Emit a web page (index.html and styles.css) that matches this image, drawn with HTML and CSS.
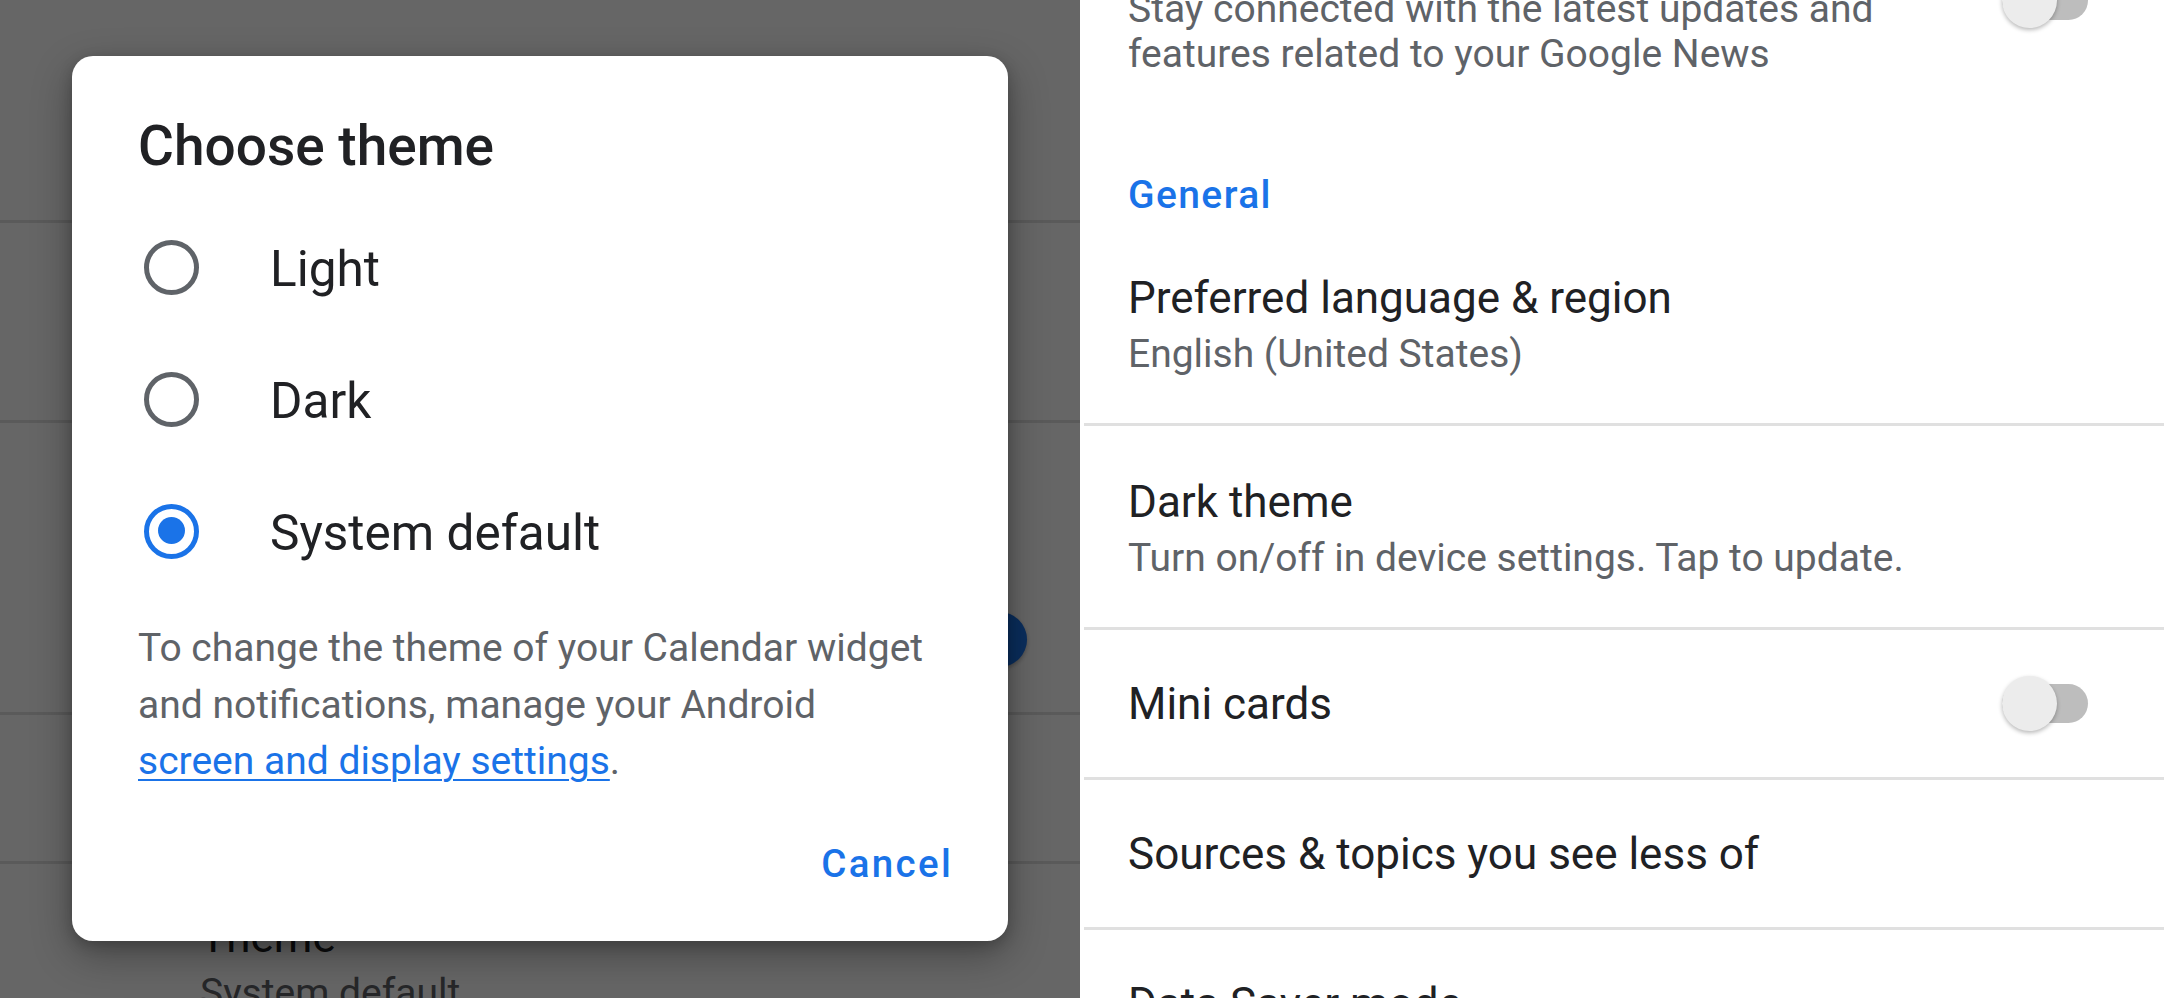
FILE: index.html
```html
<!DOCTYPE html>
<html lang="en">
<head>
    <meta charset="UTF-8">
    <meta name="viewport" content="width=device-width, initial-scale=1.0">
    <title>Settings - Choose theme</title>
    <link rel="stylesheet" href="styles.css">
</head>
<body>
    <div class="screen">
        <section class="pane pane-left">
            <div class="cal-list">
                <div class="cal-row cal-row-1">
                    <div class="row-text">
                        <div class="row-title">Start of the week</div>
                        <div class="row-sub">Sunday</div>
                    </div>
                </div>
                <div class="cal-row cal-row-2">
                    <div class="row-text">
                        <div class="row-title">Alternate calendars</div>
                        <div class="row-sub">None</div>
                    </div>
                </div>
                <div class="cal-row cal-row-3">
                    <div class="row-text">
                        <div class="row-title">Use device's time zone</div>
                        <div class="row-sub">GMT-07:00 Pacific Time</div>
                    </div>
                    <span class="switch on"></span>
                </div>
                <div class="cal-row cal-row-4">
                    <div class="row-text">
                        <div class="row-title">Default event duration</div>
                    </div>
                </div>
                <div class="cal-row cal-row-5">
                    <div class="row-text">
                        <div class="row-title">Theme</div>
                        <div class="row-sub">System default</div>
                    </div>
                </div>
            </div>

            <div class="scrim"></div>

            <div class="dialog">
                <h2 class="dialog-title">Choose theme</h2>
                <div class="radio-list">
                    <div class="radio-row">
                        <span class="radio"></span>
                        <span class="radio-label">Light</span>
                    </div>
                    <div class="radio-row">
                        <span class="radio"></span>
                        <span class="radio-label">Dark</span>
                    </div>
                    <div class="radio-row">
                        <span class="radio checked"></span>
                        <span class="radio-label">System default</span>
                    </div>
                </div>
                <p class="dialog-note">To change the theme of your Calendar widget and notifications, manage your Android <a href="#">screen and display settings</a>.</p>
                <div class="dialog-actions">
                    <button class="text-button">Cancel</button>
                </div>
            </div>
        </section>

        <section class="pane pane-right">
            <div class="news-list">
                <div class="news-row">
                    <div class="row-text">
                        <div class="row-title">Notifications from Google</div>
                        <div class="row-sub multi">Stay connected with the latest updates and features related to your Google News</div>
                    </div>
                    <span class="switch top-switch"></span>
                </div>

                <div class="section-header">General</div>

                <div class="news-row bordered">
                    <div class="row-text">
                        <div class="row-title">Preferred language &amp; region</div>
                        <div class="row-sub">English (United States)</div>
                    </div>
                </div>
                <div class="news-row bordered">
                    <div class="row-text">
                        <div class="row-title">Dark theme</div>
                        <div class="row-sub">Turn on/off in device settings. Tap to update.</div>
                    </div>
                </div>
                <div class="news-row bordered single">
                    <div class="row-text">
                        <div class="row-title">Mini cards</div>
                    </div>
                    <span class="switch"></span>
                </div>
                <div class="news-row bordered single">
                    <div class="row-text">
                        <div class="row-title">Sources &amp; topics you see less of</div>
                    </div>
                </div>
                <div class="news-row bordered single">
                    <div class="row-text">
                        <div class="row-title">Data Saver mode</div>
                    </div>
                </div>
            </div>
        </section>
    </div>
</body>
</html>
```

FILE: styles.css
```css
body {
    margin: 0;
    background: #ffffff;
    font-family: Roboto, "Noto Sans", Arial, sans-serif;
    overflow: hidden;
}

.screen {
    display: flex;
    width: 2164px;
    height: 998px;
    overflow: hidden;
}

.pane {
    height: 998px;
    overflow: hidden;
    background: #ffffff;
}

.pane-left {
    position: relative;
    width: 1080px;
    flex-shrink: 0;
}

.pane-right {
    flex: 1;
    margin-left: 4px;
}

/* shared row text */
.row-text {
    flex: 1;
    min-width: 0;
}

.row-title {
    font-size: 44px;
    line-height: 54px;
    color: #202124;
}

.row-sub {
    font-size: 39px;
    line-height: 54px;
    margin-top: 2px;
    color: #5f6368;
}

.row-sub.multi {
    line-height: 45px;
    margin-top: 0;
}

/* toggle switch */
.switch {
    position: relative;
    width: 86px;
    height: 39px;
    border-radius: 20px;
    background: #bdbdbd;
    flex-shrink: 0;
}

.switch::after {
    content: "";
    position: absolute;
    top: -8px;
    left: 0;
    width: 55px;
    height: 55px;
    border-radius: 50%;
    background: #ececec;
    box-shadow: 0 2px 4px rgba(0, 0, 0, 0.28);
}

.switch.on {
    background: #a8c7fa;
}

.switch.on::after {
    left: auto;
    right: 0;
    background: #1a73e8;
}

/* calendar list behind the dialog */
.cal-row {
    display: flex;
    align-items: center;
    box-sizing: border-box;
    padding: 0 53px 0 200px;
    border-bottom: 3px solid #e0e0e0;
}

.cal-row-1 { height: 223px; }
.cal-row-2 { height: 200px; }
.cal-row-3 {
    height: 292px;
    align-items: flex-end;
    padding-bottom: 53px;
}
.cal-row-4 { height: 149px; }
.cal-row-5 {
    border-bottom: none;
    align-items: flex-start;
    padding-top: 46px;
}

.scrim {
    position: absolute;
    inset: 0;
    background: rgba(0, 0, 0, 0.6);
}

/* dialog */
.dialog {
    position: absolute;
    top: 56px;
    left: 72px;
    width: 936px;
    height: 885px;
    box-sizing: border-box;
    padding: 58px 72px 0 66px;
    background: #ffffff;
    border-radius: 21px;
    box-shadow: 0 14px 40px rgba(0, 0, 0, 0.32), 0 4px 14px rgba(0, 0, 0, 0.2);
}

.dialog-title {
    margin: 0;
    font-size: 55px;
    line-height: 64px;
    font-weight: 500;
    color: #202124;
}

.radio-list {
    margin-top: 23px;
}

.radio-row {
    display: flex;
    align-items: center;
    height: 132px;
}

.radio {
    position: relative;
    width: 55px;
    height: 55px;
    margin-left: 6px;
    box-sizing: border-box;
    border: 5.5px solid #5f6368;
    border-radius: 50%;
    flex-shrink: 0;
}

.radio.checked {
    border-color: #1a73e8;
}

.radio.checked::after {
    content: "";
    position: absolute;
    top: 8.5px;
    left: 8.5px;
    width: 27px;
    height: 27px;
    border-radius: 50%;
    background: #1a73e8;
}

.radio-label {
    margin-left: 71px;
    padding-top: 4px;
    font-size: 49.5px;
    color: #202124;
}

.dialog-note {
    margin: 23px 0 0;
    font-size: 39px;
    line-height: 56.5px;
    color: #5f6368;
}

.dialog-note a {
    color: #1a73e8;
    text-decoration: underline;
    text-decoration-thickness: 2px;
    text-underline-offset: 5px;
}

.dialog-actions {
    display: flex;
    justify-content: flex-end;
    margin-top: 47px;
    margin-right: -17px;
}

.text-button {
    padding: 0;
    border: none;
    background: none;
    font-family: inherit;
    font-size: 38.5px;
    line-height: 54px;
    font-weight: 500;
    letter-spacing: 2.3px;
    color: #1a73e8;
}

/* news settings list */
.news-list {
    margin-top: -116px;
}

.news-row {
    display: flex;
    align-items: center;
    box-sizing: border-box;
    padding: 49px 76px 42px 44px;
}

.news-row.bordered {
    border-bottom: 3px solid #e0e0e0;
}

.news-row.single {
    height: 150px;
    padding-top: 0;
    padding-bottom: 0;
}

.top-switch {
    margin-top: -9px;
}

.section-header {
    padding: 49px 0 0 44px;
    font-size: 39px;
    line-height: 54px;
    font-weight: 500;
    letter-spacing: 1.4px;
    color: #1a73e8;
}
```
